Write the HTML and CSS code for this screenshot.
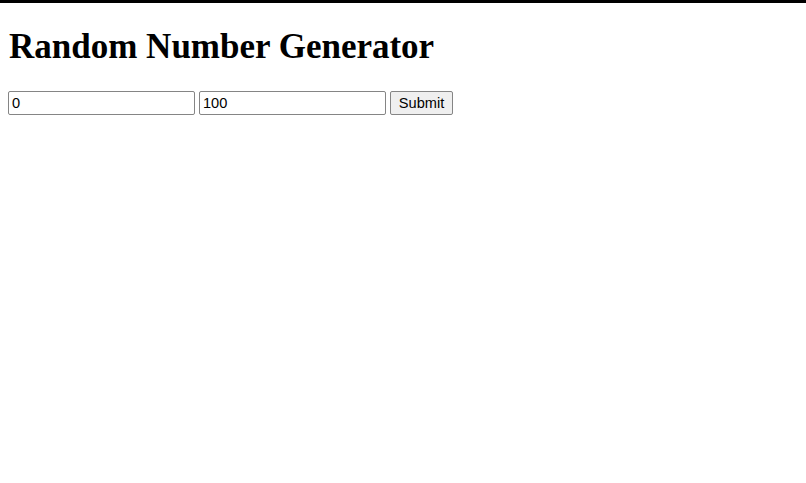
FILE: index.html
```html
<!DOCTYPE html>
<html>
<head>
<meta charset="utf-8">
<link rel="stylesheet" href="styles.css">
</head>
<body>
<div class="topbar"></div>
<h1 class="title">Random Number Generator</h1>
<form class="form">
  <input class="field" type="text" value="0">
  <input class="field" type="text" value="100">
  <button class="btn" type="button">Submit</button>
</form>
</body>
</html>
```
FILE: styles.css
```css
html, body {
  margin: 0;
  padding: 0;
  background: #fff;
}
body {
  font-family: "Liberation Serif", "Times New Roman", serif;
  color: #000;
}
.topbar {
  height: 3px;
  background: #000;
}
.title {
  font-size: 35px;
  font-weight: bold;
  margin: 24px 9px 0 9px;
  line-height: 40px;
}
.form {
  margin: 24px 8px 0 8px;
  display: flex;
  align-items: center;
  gap: 4px;
}
.field {
  box-sizing: border-box;
  width: 187px;
  height: 24px;
  border: 1px solid #858585;
  border-radius: 2px;
  padding: 1px 3px;
  font-family: "Liberation Sans", Arial, sans-serif;
  font-size: 14.6px;
  color: #000;
  margin: 0;
}
.btn {
  box-sizing: border-box;
  width: 63px;
  height: 24px;
  padding: 1px 6px;
  margin: 0;
  border: 1px solid #858585;
  border-radius: 2px;
  background: #efefef;
  font-family: "Liberation Sans", Arial, sans-serif;
  font-size: 14.6px;
  color: #000;
}
```
